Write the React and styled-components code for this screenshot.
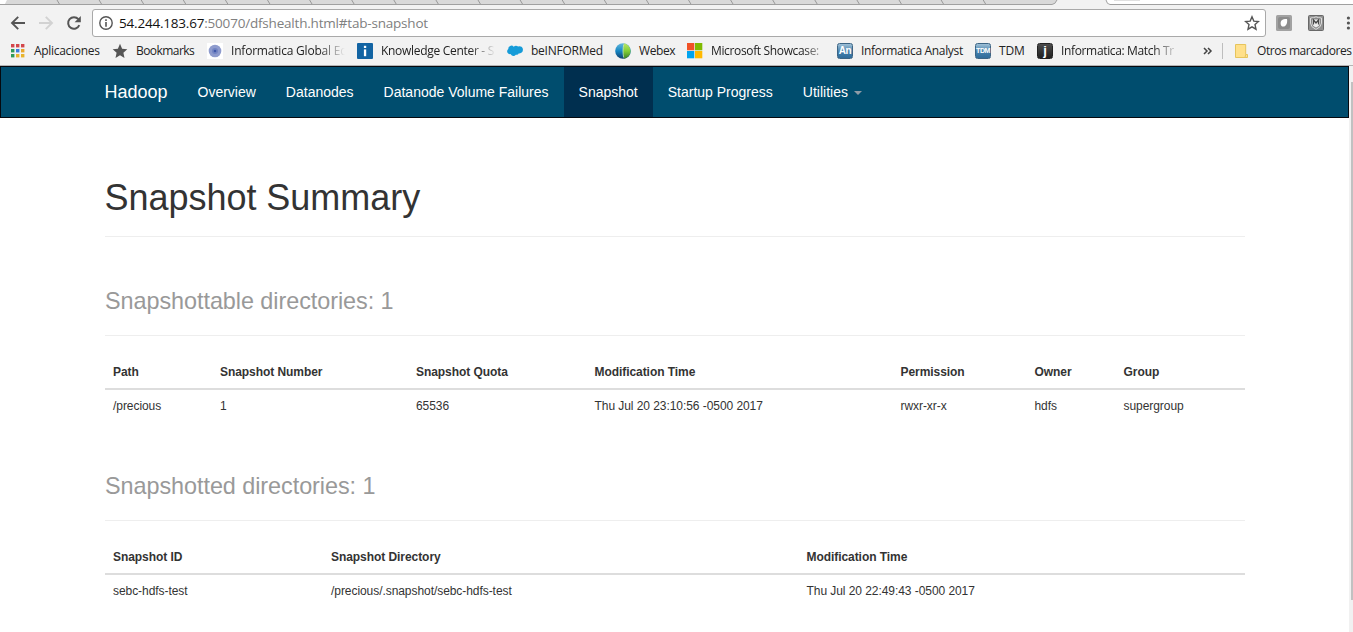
import React from "react";
import styled, { createGlobalStyle, css } from "styled-components";

const GlobalStyle = createGlobalStyle`
  * { box-sizing: border-box; }
  html, body { margin: 0; padding: 0; overflow: hidden; }
  body {
    background: #fff;
    color: #333;
    font-family: "Liberation Sans", Arial, sans-serif;
  }
`;

const Window = styled.div`
  width: 1353px;
  height: 632px;
  display: flex;
  flex-direction: column;
  overflow: hidden;
`;

const Browser = styled.header`
  flex: none;
  height: 66px;
  background: #f2f2f2;
  border-bottom: 1px solid #b4b4b4;
  font-family: "Open Sans", "Noto Sans", sans-serif;
`;

const TabStrip = styled.svg`
  display: block;
  width: 1353px;
  height: 5px;
`;

const Toolbar = styled.div`
  height: 32px;
  padding-top: 4px;
  display: flex;
  align-items: center;
`;

const NavButton = styled.span`
  width: 28px;
  height: 28px;
  display: flex;
  align-items: center;
  justify-content: center;
`;

const NavButtons = styled.div`
  width: 92px;
  padding-left: 4px;
  display: flex;
`;

const AddressBar = styled.div`
  width: 1174px;
  height: 28px;
  padding: 0 5px 0 6px;
  display: flex;
  align-items: center;
  background: #fff;
  border: 1px solid #a9a9a9;
  border-radius: 3px;
`;

const Url = styled.span`
  flex: 1;
  margin-left: 6px;
  font-size: 13.5px;
  line-height: 20px;
  letter-spacing: ${(p) => p.$spacing}px;
  color: #808080;
  white-space: nowrap;
`;

const Host = styled.span`
  color: #111;
`;

const Extensions = styled.div`
  flex: 1;
  padding-left: 10px;
  display: flex;
  align-items: center;
`;

const ExtensionSlot = styled.span`
  width: 32px;
  display: flex;
`;

const Bookmarks = styled.div`
  height: 28px;
  padding-left: 9px;
  display: flex;
  align-items: center;
`;

const Bookmark = styled.div`
  flex: none;
  width: ${(p) => p.$width}px;
  display: flex;
  align-items: center;
  gap: 8px;

  svg {
    flex: none;
  }
`;

const BookmarkLabel = styled.span`
  flex: none;
  font-size: 12px;
  line-height: 18px;
  letter-spacing: ${(p) => p.$spacing || 0}px;
  color: #222;
  white-space: nowrap;
  ${(p) =>
    p.$fade &&
    css`
      mask-image: linear-gradient(to right, #000 ${p.$fade - 26}px, transparent ${p.$fade}px);
    `}
`;

const Overflow = styled.div`
  width: 19px;
  display: flex;
`;

const Separator = styled.div`
  width: 1px;
  height: 16px;
  margin-right: 12px;
  background: #bdbdbd;
`;

const Viewport = styled.div`
  flex: 1;
  display: flex;
  min-height: 0;
`;

const Page = styled.div`
  width: 1349px;
`;

const ScrollTrack = styled.div`
  width: 4px;
  padding: 16px 0 0 2px;
  background: #f1f1f1;
`;

const ScrollThumb = styled.div`
  height: 518px;
  background: #c1c1c1;
`;

const Navbar = styled.nav`
  height: 52px;
  padding-left: 88.5px;
  display: flex;
  background: #004d6e;
  border: 1px solid #05090f;
  color: #fff;
`;

const Brand = styled.div`
  width: 93px;
  padding-left: 15px;
  font-size: 18px;
  line-height: 50px;
`;

const NavItem = styled.div`
  padding: 0 15px;
  display: flex;
  align-items: center;
  font-size: 14px;
  line-height: 50px;
  white-space: nowrap;
  background: ${(p) => (p.$active ? "#002f4f" : "transparent")};
`;

const Caret = styled.span`
  margin-left: 6px;
  margin-top: 2px;
  border: 4px solid transparent;
  border-top-color: #8f9ba6;
  border-bottom: 0;
`;

const Content = styled.main`
  width: 1140px;
  margin-left: 105px;
`;

const Heading = styled.h1`
  height: 119px;
  margin: 0 0 0 -0.5px;
  padding-top: 60px;
  border-bottom: 1px solid #eee;
  font-size: 36px;
  line-height: 40px;
  letter-spacing: -0.03px;
  font-weight: 400;
`;

const Section = styled.section`
  height: ${(p) => p.$height}px;
`;

const SectionTitle = styled.h2`
  height: ${(p) => p.$height}px;
  margin: 0;
  padding-bottom: 20px;
  display: flex;
  align-items: flex-end;
  border-bottom: 1px solid #eee;
  font-size: 23.4px;
  line-height: 27px;
  letter-spacing: -0.05px;
  font-weight: 400;
  color: #999;
`;

const Table = styled.div`
  margin-top: 20px;
`;

const Row = styled.div`
  height: ${(p) => (p.$head ? 34 : 33)}px;
  display: grid;
  grid-template-columns: ${(p) => p.$columns};
  align-items: center;
  border-bottom: ${(p) => (p.$head ? "2px solid #ddd" : "0")};
  font-size: 12px;
  line-height: 17px;
  letter-spacing: -0.06px;
  font-weight: ${(p) => (p.$head ? 700 : 400)};
`;

const Cell = styled.div`
  padding: 0 8px;
  white-space: nowrap;
`;

const AppsIcon = () => (
  <svg width="17" height="16" viewBox="0 0 17 16">
    {[
      ["#d3474b", "#d3474b", "#d3474b"],
      ["#2f9a59", "#3b7de0", "#e8a72c"],
      ["#2f9a59", "#e8b42c", "#e8b42c"],
    ].map((row, y) =>
      row.map((c, x) => (
        <rect key={`${x}${y}`} x={2 + x * 5} y={1 + y * 5} width="3.4" height="3.4" fill={c} />
      ))
    )}
  </svg>
);

const StarIcon = () => (
  <svg width="16" height="16" viewBox="0 0 16 16">
    <path d="M8 .8l2.1 4.9 5.2.5-3.9 3.5 1.1 5.2L8 12.2l-4.5 2.7 1.1-5.2L.7 6.2l5.2-.5z" fill="#555" />
  </svg>
);

const DiscIcon = () => (
  <svg width="16" height="16" viewBox="0 0 16 16">
    <rect width="16" height="16" fill="#fff" />
    <circle cx="8" cy="8" r="6.3" fill="#8e9bcd" />
    <circle cx="8" cy="8" r="3" fill="#7284c3" />
    <circle cx="8" cy="8" r="1.3" fill="#3f57a8" />
  </svg>
);

const InfoTile = () => (
  <svg width="16" height="16" viewBox="0 0 16 16">
    <rect width="16" height="16" rx="1" fill="#1264a3" />
    <rect x="6.9" y="2.8" width="2.3" height="2.2" fill="#fff" />
    <path d="M6.9 6.4h2.3v6.8H6.9z" fill="#fff" />
  </svg>
);

const CloudIcon = () => (
  <svg width="16" height="16" viewBox="0 0 16 16">
    <path
      d="M6.7 3.7a3.3 3.3 0 0 1 4.4-.1A3.3 3.3 0 0 1 15.9 7a3.3 3.3 0 0 1-4 3.3 2.6 2.6 0 0 1-3.1 1.4 3 3 0 0 1-5.2-.6A3 3 0 0 1 .1 8.2 3 3 0 0 1 1.3 6a3.1 3.1 0 0 1 5.4-2.3z"
      fill="#159bd8"
    />
  </svg>
);

const WebexIcon = () => (
  <svg width="16" height="16" viewBox="0 0 16 16">
    <defs>
      <linearGradient id="ballBlue" x1="0" y1="0" x2="0" y2="1">
        <stop offset="0" stopColor="#67b9dc" />
        <stop offset=".5" stopColor="#1687c4" />
        <stop offset="1" stopColor="#103f6c" />
      </linearGradient>
      <linearGradient id="ballGreen" x1="0" y1="0" x2="0" y2="1">
        <stop offset="0" stopColor="#bce568" />
        <stop offset=".5" stopColor="#83cf35" />
        <stop offset="1" stopColor="#397f28" />
      </linearGradient>
    </defs>
    <circle cx="8" cy="8" r="7.8" fill="url(#ballBlue)" />
    <path d="M9 .3c-1.2 4.500-1.200 11 0 15.400A7.800 7.800 0 0 0 9 .3z" fill="url(#ballGreen)" />
    <path d="M8.700 1.500c-.9 4.500-.9 8.500 0 13" fill="none" stroke="#c9e8b0" strokeWidth=".8" />
  </svg>
);

const WindowsIcon = () => (
  <svg width="16" height="16" viewBox="0 0 16 16">
    <rect x="0" y="0" width="7.3" height="7.3" fill="#f05125" />
    <rect x="8" y="0" width="7.3" height="7.3" fill="#7fba00" />
    <rect x="0" y="8" width="7.3" height="7.3" fill="#00a3ee" />
    <rect x="8" y="8" width="7.3" height="7.3" fill="#ffb901" />
  </svg>
);

const Tile = styled.span`
  flex: none;
  width: 16px;
  height: 16px;
  display: flex;
  align-items: center;
  justify-content: center;
  border-radius: 2.5px;
  border: 1px solid ${(p) => (p.$dark ? "#222" : "#3c6585")};
  background: ${(p) =>
    p.$dark ? "linear-gradient(#4b4b4b, #202020)" : "linear-gradient(#9dbfd6, #4580ab 55%, #2f6c9b)"};
  color: #fff;
  font: 700 ${(p) => p.$size}px/14px "Liberation Sans", sans-serif;
  letter-spacing: ${(p) => (p.$dark ? 0 : -0.4)}px;
`;

const FolderIcon = () => (
  <svg width="14" height="16" viewBox="0 0 14 16">
    <path d="M.5 1.5h10.2v10h1.8v3H.5z" fill="#ffe08a" stroke="#e6c45c" />
    <path d="M10.7 11.5l-.7 3" stroke="#e6c45c" fill="none" />
  </svg>
);

const bookmarks = [
  { icon: <AppsIcon />, label: "Aplicaciones", width: 103, spacing: -0.3 },
  { icon: <StarIcon />, label: "Bookmarks", width: 95, spacing: -0.55 },
  { icon: <DiscIcon />, label: "Informatica Global Ed", width: 150, spacing: -0.2, fade: 114 },
  { icon: <InfoTile />, label: "Knowledge Center - S", width: 150, spacing: -0.3, fade: 115 },
  { icon: <CloudIcon />, label: "beINFORMed", width: 108, spacing: -0.25 },
  { icon: <WebexIcon />, label: "Webex", width: 72, spacing: -0.4 },
  { icon: <WindowsIcon />, label: "Microsoft Showcase:", width: 150, spacing: -0.35, fade: 118 },
  { icon: <Tile $size={10}>An</Tile>, label: "Informatica Analyst", width: 138, spacing: -0.33 },
  { icon: <Tile $size={7}>TDM</Tile>, label: "TDM", width: 62, spacing: -0.1 },
  { icon: <Tile $dark $size={13}>j</Tile>, label: "Informatica: Match Tr", width: 166, spacing: -0.35, fade: 118 },
];

const slants = Array.from({ length: 23 }, (_, i) => 57 + i * 42.1);

function BrowserChrome() {
  return (
    <Browser>
      <TabStrip viewBox="0 0 1353 5">
        <rect width="1353" height="5" fill="#f2f2f2" />
        <path d="M0 0h7l-2 4H0z" fill="#fff" />
        <path d="M7 0h1050l-2 4H5z" fill="#d9d9d9" />
        {slants.map((x) => (
          <path key={x} d={`M${x} 0l2.4 4`} stroke="#999" />
        ))}
        <path d="M0 4.5h1052q3 0 5-4.5" fill="none" stroke="#a0a0a0" />
        <path d="M1106 0l2 4.5h245V0z" fill="#fff" />
        <path d="M1106 0q1 4.5 4 4.5h243" fill="none" stroke="#a0a0a0" />
        <rect x="1114" width="26" height="1" fill="#e0e0e0" />
      </TabStrip>
      <Toolbar>
        <NavButtons>
          <NavButton>
            <svg width="16" height="16" viewBox="0 0 16 16" fill="none" stroke="#555" strokeWidth="1.9">
              <path d="M15 8H2.5M8.2 1.8L2 8l6.2 6.2" />
            </svg>
          </NavButton>
          <NavButton>
            <svg width="16" height="16" viewBox="0 0 16 16" fill="none" stroke="#d2d2d2" strokeWidth="1.9">
              <path d="M1 8h12.5M7.8 1.8L14 8l-6.2 6.2" />
            </svg>
          </NavButton>
          <NavButton>
            <svg width="16" height="16" viewBox="0 0 16 16">
              <path d="M13.3 10.2A5.8 5.8 0 1 1 12.4 4.2" fill="none" stroke="#555" strokeWidth="2" />
              <path d="M14.8 1v6.2H8.6z" fill="#555" />
            </svg>
          </NavButton>
        </NavButtons>
        <AddressBar>
          <svg width="14" height="14" viewBox="0 0 14 14">
            <circle cx="7" cy="7" r="6.2" fill="none" stroke="#555" strokeWidth="1.4" />
            <path d="M6.2 3.3h1.6v1.6H6.2zM6.2 6h1.6v4.7H6.2z" fill="#555" />
          </svg>
          <Url $spacing={-0.2}>
            <Host>54.244.183.67</Host>:50070/dfshealth.html#tab-snapshot
          </Url>
          <svg width="16" height="16" viewBox="0 0 16 16">
            <path
              d="M8 1.8l1.8 4.3 4.7.4-3.5 3.1 1 4.6L8 11.8l-4 2.4 1-4.6-3.5-3.1 4.7-.4z"
              fill="none"
              stroke="#555"
              strokeWidth="1.4"
            />
          </svg>
        </AddressBar>
        <Extensions>
          <ExtensionSlot>
            <svg width="16" height="16" viewBox="0 0 16 16">
              <rect width="16" height="16" rx="1.5" fill="#a2a2a2" />
              <rect x="2" y="2" width="12" height="12" rx="2" fill="#8c8c8c" />
              <path d="M4.600 8.200C4.600 5 7.500 3.700 11 4c.8 4-1 7.600-3.800 7.600-1.700 0-2.600-1.500-2.600-3.400z" fill="#fff" />
            </svg>
          </ExtensionSlot>
          <ExtensionSlot>
            <svg width="16" height="16" viewBox="0 0 16 16">
              <rect x=".5" y=".5" width="15" height="15" rx="1" fill="#909090" stroke="#686868" />
              <path d="M2.5 3Q5.5 3 8 1.8 10.5 3 13.5 3v5q0 4-5.5 6.4Q2.5 12 2.5 8z" fill="#8a8a8a" stroke="#ddd" />
              <path d="M4 4.5h8V8.5Q11.5 11 8 12.5 4.5 11 4 8.5z" fill="#eee" />
              <path d="M5.4 9.500V5L8 8l2.600-3v4.500" fill="none" stroke="#4a4a4a" strokeWidth="1.400" />
            </svg>
          </ExtensionSlot>
          <svg width="12" height="16" viewBox="0 0 12 16" fill="#555">
            <circle cx="8.4" cy="3" r="1.6" />
            <circle cx="8.4" cy="8" r="1.6" />
            <circle cx="8.4" cy="13" r="1.6" />
          </svg>
        </Extensions>
      </Toolbar>
      <Bookmarks>
        {bookmarks.map((b) => (
          <Bookmark key={b.label} $width={b.width}>
            {b.icon}
            <BookmarkLabel $spacing={b.spacing} $fade={b.fade}>
              {b.label}
            </BookmarkLabel>
          </Bookmark>
        ))}
        <Overflow>
          <svg width="10" height="8" viewBox="0 0 10 8" fill="none" stroke="#444" strokeWidth="1.5">
            <path d="M1 1l3 3-3 3M5 1l3 3-3 3" />
          </svg>
        </Overflow>
        <Separator />
        <Bookmark $width={118}>
          <FolderIcon />
          <BookmarkLabel $spacing={-0.44}>Otros marcadores</BookmarkLabel>
        </Bookmark>
      </Bookmarks>
    </Browser>
  );
}

function DataTable({ columns, head, row }) {
  return (
    <Table>
      <Row $head $columns={columns}>
        {head.map((h) => (
          <Cell key={h}>{h}</Cell>
        ))}
      </Row>
      <Row $columns={columns}>
        {row.map((c) => (
          <Cell key={c}>{c}</Cell>
        ))}
      </Row>
    </Table>
  );
}

export default function App() {
  return (
    <Window>
      <GlobalStyle />
      <BrowserChrome />
      <Viewport>
        <Page>
          <Navbar>
            <Brand>Hadoop</Brand>
            <NavItem>Overview</NavItem>
            <NavItem>Datanodes</NavItem>
            <NavItem>Datanode Volume Failures</NavItem>
            <NavItem $active>Snapshot</NavItem>
            <NavItem>Startup Progress</NavItem>
            <NavItem>
              Utilities
              <Caret />
            </NavItem>
          </Navbar>
          <Content>
            <Heading>Snapshot Summary</Heading>
            <Section $height={185}>
              <SectionTitle $height={99}>Snapshottable directories: 1</SectionTitle>
              <DataTable
                columns="107px 196px 178.5px 306px 134px 89px 129.5px"
                head={["Path", "Snapshot Number", "Snapshot Quota", "Modification Time", "Permission", "Owner", "Group"]}
                row={["/precious", "1", "65536", "Thu Jul 20 23:10:56 -0500 2017", "rwxr-xr-x", "hdfs", "supergroup"]}
              />
            </Section>
            <Section $height={185}>
              <SectionTitle $height={99}>Snapshotted directories: 1</SectionTitle>
              <DataTable
                columns="218px 475.5px 446.5px"
                head={["Snapshot ID", "Snapshot Directory", "Modification Time"]}
                row={["sebc-hdfs-test", "/precious/.snapshot/sebc-hdfs-test", "Thu Jul 20 22:49:43 -0500 2017"]}
              />
            </Section>
          </Content>
        </Page>
        <ScrollTrack>
          <ScrollThumb />
        </ScrollTrack>
      </Viewport>
    </Window>
  );
}
